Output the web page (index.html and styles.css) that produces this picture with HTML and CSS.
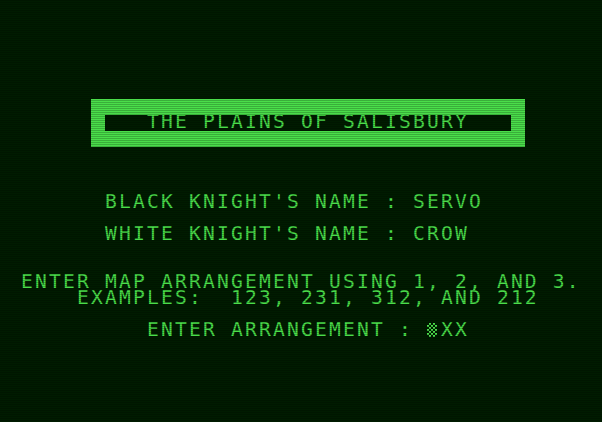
FILE: index.html
```html
<!DOCTYPE html>
<html lang="en">
<head>
    <meta charset="UTF-8">
    <meta name="viewport" content="width=device-width, initial-scale=1.0">
    <title>The Plains of Salisbury</title>
    <link rel="stylesheet" href="styles.css">
</head>
<body>
    <div class="screen">
        <div class="title-box">
            <div class="title-inner">THE PLAINS OF SALISBURY</div>
        </div>
        <div class="row gap-3">      BLACK KNIGHT'S NAME : SERVO</div>
        <div class="row gap-1">      WHITE KNIGHT'S NAME : CROW</div>
        <div class="row gap-2">ENTER MAP ARRANGEMENT USING 1, 2, AND 3.</div>
        <div class="row">    EXAMPLES:  123, 231, 312, AND 212</div>
        <div class="row gap-1">         ENTER ARRANGEMENT : <span class="cursor"></span>XX</div>
    </div>
</body>
</html>
```

FILE: styles.css
```css
body {
    margin: 0;
    background-color: #001c00;
}
.screen {
    position: relative;
    width: 602px;
    height: 422px;
    overflow: hidden;
    box-sizing: border-box;
    padding: 19px 0 0 21px;
    background-color: #001c00;
    color: #4ade4a;
    font-family: "DejaVu Sans Mono", monospace;
    font-size: 19.6px;
    letter-spacing: 2.2px;
    line-height: 14px;
}
/* crt scanlines */
.screen::after {
    content: "";
    position: absolute;
    top: 0;
    left: 0;
    right: 0;
    bottom: 0;
    pointer-events: none;
    background-image: repeating-linear-gradient(to bottom, rgba(0, 0, 0, 0.22) 0 1px, transparent 1px 2px);
}
.row {
    height: 16px;
    white-space: pre;
}
.gap-1 { margin-top: 16px; }
.gap-2 { margin-top: 32px; }
.gap-3 { margin-top: 48px; }
.title-box {
    margin: 80px 0 0 70px;
    width: 434px;
    padding: 16px 14px;
    box-sizing: border-box;
    background-color: #4ade4a;
}
.title-inner {
    height: 16px;
    padding-left: 42px;
    background-color: #001c00;
    white-space: pre;
}
.cursor {
    display: inline-block;
    width: 10px;
    height: 14px;
    margin-right: 4px;
    vertical-align: top;
    background-image: repeating-conic-gradient(#4ade4a 0 25%, transparent 0 50%);
    background-size: 4px 4px;
}
```
